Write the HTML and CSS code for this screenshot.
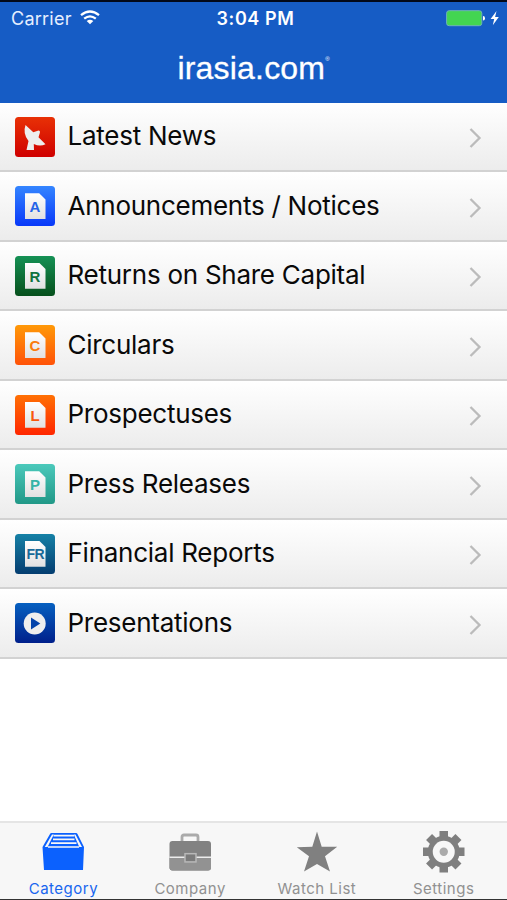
FILE: index.html
```html
<!DOCTYPE html>
<html lang="en">
<head>
<meta charset="utf-8">
<title>irasia.com</title>
<link rel="stylesheet" href="styles.css">
</head>
<body>
<div class="app">
  <header class="header">
    <div class="status">
      <div class="status-left">
        <span class="carrier">Carrier</span>
        <svg class="wifi" width="20" height="15" viewBox="0 0 20 15"><g fill="none" stroke="#fff" stroke-width="2.3"><path d="M1 5.2Q10-2.2 19 5.2"/><path d="M4.2 8.7Q10 4 15.8 8.7"/></g><path d="M6.7 11Q10 8.5 13.3 11L10 14.3Z" fill="#fff"/></svg>
      </div>
      <span class="time">3:04 PM</span>
      <svg class="battery" width="54" height="18" viewBox="0 0 54 18"><rect x=".6" y="1.7" width="35.2" height="15" rx="2.5" fill="#43d551" stroke="#6fb3b5"/><path d="M37 7q2 0 2 2.200t-2 2.200Z" fill="#fff"/><path d="M50.500 2L44.600 10H48.200L46.800 16.200L52.800 8H49.100Z" fill="#fff"/></svg>
    </div>
    <h1 class="brand"><span class="brand-name">irasia.com</span><span class="reg">®</span></h1>
  </header>
  <main class="list">
    <div class="row"><span class="icon news"><svg width="40" height="40" viewBox="0 0 40 40"><path d="M10.500 8L18.300 15.300L23.500 13.500Q25.500 13.700 24.800 16L23.500 20.300L30.500 27.300Q25 30 18.800 27L19 33H11.500L13.500 24Q7.500 16.500 10.500 8Z" fill="#eee"/></svg></span><span class="label">Latest News</span><svg class="chevron" width="13" height="22" viewBox="0 0 13 22"><path d="M1.500 2L10.500 11L1.500 20"/></svg></div>
    <div class="row"><span class="icon ann"><span class="doc">A</span></span><span class="label">Announcements / Notices</span><svg class="chevron" width="13" height="22" viewBox="0 0 13 22"><path d="M1.500 2L10.500 11L1.500 20"/></svg></div>
    <div class="row"><span class="icon ret"><span class="doc">R</span></span><span class="label">Returns on Share Capital</span><svg class="chevron" width="13" height="22" viewBox="0 0 13 22"><path d="M1.500 2L10.500 11L1.500 20"/></svg></div>
    <div class="row"><span class="icon cir"><span class="doc">C</span></span><span class="label">Circulars</span><svg class="chevron" width="13" height="22" viewBox="0 0 13 22"><path d="M1.500 2L10.500 11L1.500 20"/></svg></div>
    <div class="row"><span class="icon pro"><span class="doc">L</span></span><span class="label">Prospectuses</span><svg class="chevron" width="13" height="22" viewBox="0 0 13 22"><path d="M1.500 2L10.500 11L1.500 20"/></svg></div>
    <div class="row"><span class="icon press"><span class="doc">P</span></span><span class="label">Press Releases</span><svg class="chevron" width="13" height="22" viewBox="0 0 13 22"><path d="M1.500 2L10.500 11L1.500 20"/></svg></div>
    <div class="row"><span class="icon fin"><span class="doc wide">FR</span></span><span class="label">Financial Reports</span><svg class="chevron" width="13" height="22" viewBox="0 0 13 22"><path d="M1.500 2L10.500 11L1.500 20"/></svg></div>
    <div class="row"><span class="icon pres"><svg width="40" height="40" viewBox="0 0 40 40"><circle cx="19.700" cy="20.500" r="11" fill="#eee"/><path d="M16 14.500V26.500L25.300 20.500Z" fill="#0544aa"/></svg></span><span class="label">Presentations</span><svg class="chevron" width="13" height="22" viewBox="0 0 13 22"><path d="M1.500 2L10.500 11L1.500 20"/></svg></div>
  </main>
  <nav class="tabs">
    <div class="tab active"><svg width="44" height="44" viewBox="0 0 44 44"><path d="M10.500 3H35Q36 3 36.500 4L43 17L42 40H3L1.500 17L9 4Q9.500 3 10.500 3Z" fill="#0b61fe"/><path d="M11 4.600H12.800L6.500 17H3.800ZM32.800 4.600H34.500L41 17H38.300Z" fill="#f7f7f7"/><g stroke="#f7f7f7" stroke-width="1.700"><path d="M12.500 5.600H33M12 9.400H33.500M10 13.200H35.500M7 17H38"/></g></svg><span class="tab-label">Category</span></div>
    <div class="tab"><svg width="44" height="44" viewBox="0 0 44 44"><path d="M14 11V7Q14 5 16 5H28Q30 5 30 7V11" fill="none" stroke="#aaa" stroke-width="2.800"/><rect x="1.500" y="11" width="41.500" height="29.500" rx="3" fill="#828282"/><path d="M1.500 28H43V37.500Q43 40.500 40 40.500H4.500Q1.500 40.500 1.500 37.500Z" fill="#929292"/><path d="M1.500 27.200H43" stroke="#ececec" stroke-width="1.500"/><rect x="17" y="23.700" width="11" height="8.200" fill="#7b7b7b" stroke="#b8b8b8" stroke-width="1.500"/></svg><span class="tab-label">Company</span></div>
    <div class="tab"><svg width="44" height="44" viewBox="0 0 44 44"><path d="M22 1.500L26.700 16.700H42.200L30 26.200L35 41.500L22 34L9 41.500L14 26.200L1.800 17.300L17.300 16.700Z" fill="#808080"/></svg><span class="tab-label">Watch List</span></div>
    <div class="tab"><svg width="44" height="44" viewBox="0 0 44 44"><g fill="#7f7f7f"><rect x="17.500" y="1" width="8.500" height="41.500"/><rect x="17.500" y="1" width="8.500" height="41.500" transform="rotate(45 21.750 21.750)"/><rect x="17.500" y="1" width="8.500" height="41.500" transform="rotate(90 21.750 21.750)"/><rect x="17.500" y="1" width="8.500" height="41.500" transform="rotate(135 21.750 21.750)"/><circle cx="21.750" cy="21.750" r="16"/></g><circle cx="21.750" cy="21.750" r="11" fill="#f7f7f7"/><circle cx="21.750" cy="21.750" r="4.200" fill="#aaa"/></svg><span class="tab-label">Settings</span></div>
  </nav>
</div>
</body>
</html>
```
FILE: styles.css
```css
* { box-sizing: border-box; }
body { margin: 0; background: #fff; font-family: Inter, "Liberation Sans", sans-serif; }
.app { height: 900px; display: flex; flex-direction: column; overflow: hidden; border-bottom: 1px solid #333; }
.header { height: 102.500px; flex: none; background: #165cc5; border-top: 2px solid #02091a; color: #fff; }
.status { height: 33px; display: grid; grid-template-columns: 1fr auto 1fr; align-items: center; padding: 0 7px 0 11px; }
.status-left { display: flex; align-items: center; gap: 8px; }
.carrier { font-size: 18px; line-height: 22px; letter-spacing: .25px; color: #e6efff; }
.wifi { margin-top: -2px; }
.time { font-size: 18px; line-height: 22px; font-weight: 600; letter-spacing: .6px; }
.battery { justify-self: end; margin-top: -1px; }
.brand { margin: 14px 0 0; display: flex; justify-content: center; align-items: flex-start; font: 400 32px/38px "Liberation Sans", sans-serif; }
.brand-name { letter-spacing: .2px; -webkit-text-stroke: .3px #fff; }
.reg { font-size: 6px; line-height: 20px; }
.list { flex: 1; }
.row { height: 69.500px; display: flex; align-items: center; padding: 1px 25px 0 15px; background: linear-gradient(#fff, #ececec); border-bottom: 2px solid #d2d2d2; }
.icon { width: 40px; height: 40px; flex: none; border-radius: 3.500px; display: flex; justify-content: center; align-items: center; }
.news { background: linear-gradient(#e83106, #cf0000); }
.ann { background: linear-gradient(#3485ff, #0838f9); color: #2564e8; }
.ret { background: linear-gradient(#159155, #07501c); color: #117340; }
.cir { background: linear-gradient(#ff9908, #ff5208); color: #fa7c0c; }
.pro { background: linear-gradient(#ff7004, #ff2600); color: #f8580c; }
.press { background: linear-gradient(#4bc9bb, #219887); color: #36b4a6; }
.fin { background: linear-gradient(#1681a6, #043d70); color: #186a99; }
.pres { background: linear-gradient(#0660c0, #00208b); }
.doc { width: 21px; height: 26px; background: linear-gradient(#fff, #e1e1e1); clip-path: polygon(0 0, 70% 0, 100% 24%, 100% 100%, 0 100%); font: 700 15px/27px "Liberation Sans", sans-serif; text-align: center; }
.wide { font-size: 14px; letter-spacing: -.5px; text-indent: .5px; }
.label { flex: 1; margin: -1px 0 0 12.500px; font-size: 26px; line-height: 32px; letter-spacing: -.26px; color: #090909; white-space: nowrap; }
.chevron { flex: none; margin-top: 3px; fill: none; stroke: #bbb; stroke-width: 2.300; }
.tabs { height: 78px; flex: none; display: grid; grid-template-columns: repeat(4, 1fr); background: #f7f7f7; border-top: 2px solid #e5e5e5; }
.tab { display: flex; flex-direction: column; align-items: center; padding-top: 7px; color: #919191; }
.tab svg { flex: none; }
.tab-label { margin-top: 5px; font-size: 15px; line-height: 20px; letter-spacing: .5px; white-space: nowrap; }
.active { color: #1766ef; }
```
